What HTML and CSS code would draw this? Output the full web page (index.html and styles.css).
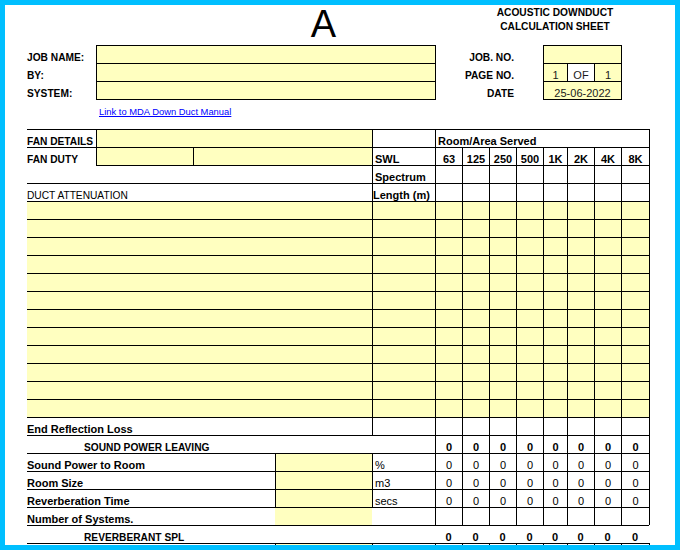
FILE: index.html
```html
<!DOCTYPE html>
<html>
<head>
<meta charset="utf-8">
<title>Acoustic Downduct Calculation Sheet</title>
<link rel="stylesheet" href="styles.css">
</head>
<body>
<div class="frame">
  <div class="sheet">
    <!-- title -->
    <div class="sp3"></div>
    <div class="big">A</div>
    <div class="sp3"></div>
    <div class="sp5 title">ACOUSTIC DOWNDUCT<br>CALCULATION SHEET</div>
    <div></div>

    <!-- job info -->
    <div class="c b uc">JOB NAME:</div>
    <div class="sp4 y t l rb"></div>
    <div class="sp4 c b uc rt">JOB. NO.</div>
    <div class="sp3 y t l rb"></div>
    <div></div>

    <div class="c b uc">BY:</div>
    <div class="sp4 y t l rb"></div>
    <div class="sp4 c b uc rt">PAGE NO.</div>
    <div class="c n y t l val">1</div>
    <div class="c n t l val">OF</div>
    <div class="c n y t l rb val">1</div>
    <div></div>

    <div class="c b uc">SYSTEM:</div>
    <div class="sp4 y t l rb bb"></div>
    <div class="sp4 c b uc rt">DATE</div>
    <div class="sp3 c n y t l rb bb val">25-06-2022</div>
    <div></div>

    <div></div>
    <div class="sp12 linkcell"><a href="#" class="link">Link to MDA Down Duct Manual</a></div>

    <!-- T1 -->
    <div class="c t b uc">FAN DETAILS</div>
    <div class="sp3 y t l"></div>
    <div class="t l"></div>
    <div class="sp8 c t l rb b pl">Room/Area Served</div>

    <!-- T2 -->
    <div class="c t b uc">FAN DUTY</div>
    <div class="y t l"></div>
    <div class="sp2 y t l"></div>
    <div class="c t l b pl">SWL</div>
    <div class="c n t l b">63</div>
    <div class="c n t l b">125</div>
    <div class="c n t l b">250</div>
    <div class="c n t l b">500</div>
    <div class="c n t l b">1K</div>
    <div class="c n t l b">2K</div>
    <div class="c n t l b">4K</div>
    <div class="c n t l rb b">8K</div>

    <!-- T3 -->
    <div></div>
    <div class="sp3 t"></div>
    <div class="c t l b pl">Spectrum</div>
    <div class="t l"></div><div class="t l"></div><div class="t l"></div><div class="t l"></div>
    <div class="t l"></div><div class="t l"></div><div class="t l"></div><div class="t l rb"></div>

    <!-- T4 -->
    <div class="sp4 c t uc">DUCT ATTENUATION</div>
    <div class="c t l b">Length (m)</div>
    <div class="t l"></div><div class="t l"></div><div class="t l"></div><div class="t l"></div>
    <div class="t l"></div><div class="t l"></div><div class="t l"></div><div class="t l rb"></div>

    <!-- attenuation rows x12 -->
    <div class="sp4 y t"></div><div class="y t l"></div>
    <div class="y t l"></div><div class="y t l"></div><div class="y t l"></div><div class="y t l"></div>
    <div class="y t l"></div><div class="y t l"></div><div class="y t l"></div><div class="y t l rb"></div>

    <div class="sp4 y t"></div><div class="y t l"></div>
    <div class="y t l"></div><div class="y t l"></div><div class="y t l"></div><div class="y t l"></div>
    <div class="y t l"></div><div class="y t l"></div><div class="y t l"></div><div class="y t l rb"></div>

    <div class="sp4 y t"></div><div class="y t l"></div>
    <div class="y t l"></div><div class="y t l"></div><div class="y t l"></div><div class="y t l"></div>
    <div class="y t l"></div><div class="y t l"></div><div class="y t l"></div><div class="y t l rb"></div>

    <div class="sp4 y t"></div><div class="y t l"></div>
    <div class="y t l"></div><div class="y t l"></div><div class="y t l"></div><div class="y t l"></div>
    <div class="y t l"></div><div class="y t l"></div><div class="y t l"></div><div class="y t l rb"></div>

    <div class="sp4 y t"></div><div class="y t l"></div>
    <div class="y t l"></div><div class="y t l"></div><div class="y t l"></div><div class="y t l"></div>
    <div class="y t l"></div><div class="y t l"></div><div class="y t l"></div><div class="y t l rb"></div>

    <div class="sp4 y t"></div><div class="y t l"></div>
    <div class="y t l"></div><div class="y t l"></div><div class="y t l"></div><div class="y t l"></div>
    <div class="y t l"></div><div class="y t l"></div><div class="y t l"></div><div class="y t l rb"></div>

    <div class="sp4 y t"></div><div class="y t l"></div>
    <div class="y t l"></div><div class="y t l"></div><div class="y t l"></div><div class="y t l"></div>
    <div class="y t l"></div><div class="y t l"></div><div class="y t l"></div><div class="y t l rb"></div>

    <div class="sp4 y t"></div><div class="y t l"></div>
    <div class="y t l"></div><div class="y t l"></div><div class="y t l"></div><div class="y t l"></div>
    <div class="y t l"></div><div class="y t l"></div><div class="y t l"></div><div class="y t l rb"></div>

    <div class="sp4 y t"></div><div class="y t l"></div>
    <div class="y t l"></div><div class="y t l"></div><div class="y t l"></div><div class="y t l"></div>
    <div class="y t l"></div><div class="y t l"></div><div class="y t l"></div><div class="y t l rb"></div>

    <div class="sp4 y t"></div><div class="y t l"></div>
    <div class="y t l"></div><div class="y t l"></div><div class="y t l"></div><div class="y t l"></div>
    <div class="y t l"></div><div class="y t l"></div><div class="y t l"></div><div class="y t l rb"></div>

    <div class="sp4 y t"></div><div class="y t l"></div>
    <div class="y t l"></div><div class="y t l"></div><div class="y t l"></div><div class="y t l"></div>
    <div class="y t l"></div><div class="y t l"></div><div class="y t l"></div><div class="y t l rb"></div>

    <div class="sp4 y t"></div><div class="y t l"></div>
    <div class="y t l"></div><div class="y t l"></div><div class="y t l"></div><div class="y t l"></div>
    <div class="y t l"></div><div class="y t l"></div><div class="y t l"></div><div class="y t l rb"></div>

    <!-- End reflection loss -->
    <div class="sp4 c t b">End Reflection Loss</div>
    <div class="t l"></div>
    <div class="t l"></div><div class="t l"></div><div class="t l"></div><div class="t l"></div>
    <div class="t l"></div><div class="t l"></div><div class="t l"></div><div class="t l rb"></div>

    <!-- Sound power leaving -->
    <div class="sp5 c t b uc ind">SOUND POWER LEAVING</div>
    <div class="c n t l b">0</div><div class="c n t l b">0</div><div class="c n t l b">0</div><div class="c n t l b">0</div>
    <div class="c n t l b">0</div><div class="c n t l b">0</div><div class="c n t l b">0</div><div class="c n t l rb b">0</div>

    <!-- Sound power to room -->
    <div class="sp3 c t b">Sound Power to Room</div>
    <div class="y t l"></div>
    <div class="c t l pl">%</div>
    <div class="c n t l">0</div><div class="c n t l">0</div><div class="c n t l">0</div><div class="c n t l">0</div>
    <div class="c n t l">0</div><div class="c n t l">0</div><div class="c n t l">0</div><div class="c n t l rb">0</div>

    <!-- Room size -->
    <div class="sp3 c t b">Room Size</div>
    <div class="y t l"></div>
    <div class="c t l pl">m3</div>
    <div class="c n t l">0</div><div class="c n t l">0</div><div class="c n t l">0</div><div class="c n t l">0</div>
    <div class="c n t l">0</div><div class="c n t l">0</div><div class="c n t l">0</div><div class="c n t l rb">0</div>

    <!-- Reverberation time -->
    <div class="sp3 c t b">Reverberation Time</div>
    <div class="y t l"></div>
    <div class="c t l pl">secs</div>
    <div class="c n t l">0</div><div class="c n t l">0</div><div class="c n t l">0</div><div class="c n t l">0</div>
    <div class="c n t l">0</div><div class="c n t l">0</div><div class="c n t l">0</div><div class="c n t l rb">0</div>

    <!-- Number of systems -->
    <div class="sp3 c t b">Number of Systems.</div>
    <div class="y t"></div>
    <div class="t"></div>
    <div class="t l"></div><div class="t l"></div><div class="t l"></div><div class="t l"></div>
    <div class="t l"></div><div class="t l"></div><div class="t l"></div><div class="t l rb"></div>

    <!-- Reverberant SPL -->
    <div class="sp5 c t b uc ind">REVERBERANT SPL</div>
    <div class="c n t b">0</div><div class="c n t b">0</div><div class="c n t b">0</div><div class="c n t b">0</div>
    <div class="c n t b">0</div><div class="c n t b">0</div><div class="c n t b">0</div><div class="c n t b">0</div>

    <!-- next row (cut off) -->
    <div class="sp3 t"></div>
    <div class="y t l"></div>
    <div class="t l"></div>
    <div class="t l"></div><div class="t l"></div><div class="t l"></div><div class="t l"></div>
    <div class="t l"></div><div class="t l"></div><div class="t l"></div><div class="t l rb"></div>
  </div>
</div>
</body>
</html>
```

FILE: styles.css
```css
html, body {
  margin: 0;
  padding: 0;
  background: #ffffff;
}

body {
  font-family: "Liberation Sans", Arial, sans-serif;
  font-size: 11px;
  color: #000000;
}

.frame {
  width: 680px;
  height: 550px;
  box-sizing: border-box;
  border: 5px solid #00bfff;
  overflow: hidden;
  background: #ffffff;
}

.sheet {
  display: grid;
  grid-template-columns: 69px 97px 82px 97px 63px 27px 27px 27px 27px 24px 27px 27px 28px;
  grid-template-rows: 40px 18px 18px 18px 30px;
  grid-auto-rows: 18px;
  padding-left: 22px;
}

.sheet > div {
  box-sizing: border-box;
  min-width: 0;
}

.sp2 { grid-column: span 2; }
.sp3 { grid-column: span 3; }
.sp4 { grid-column: span 4; }
.sp5 { grid-column: span 5; }
.sp8 { grid-column: span 8; }
.sp12 { grid-column: span 12; }

.big {
  font-size: 38px;
  line-height: 38px;
  text-align: center;
}

.title {
  font-size: 10.2px;
  font-weight: bold;
  line-height: 13.5px;
  text-align: center;
  padding-top: 1px;
}

.c {
  display: flex;
  align-items: flex-end;
  white-space: nowrap;
  line-height: 1;
}

.b { font-weight: bold; }
.uc { font-size: 10.2px; }
.n { justify-content: center; }
.rt { justify-content: flex-end; padding-right: 29px; }
.pl { padding-left: 2px; }
.ind { padding-left: 57px; }
.val { color: #1a1a1a; }

.y { background: #ffffc0; }
.t { border-top: 1px solid #000; }
.l { border-left: 1px solid #000; }
.rb { border-right: 1px solid #000; margin-right: -1px; }
.bb { border-bottom: 1px solid #000; margin-bottom: -1px; }

.linkcell {
  padding-left: 3px;
  padding-top: 6px;
}

.link {
  font-size: 9.4px;
  color: #0000ff;
  text-decoration: underline;
}
```
